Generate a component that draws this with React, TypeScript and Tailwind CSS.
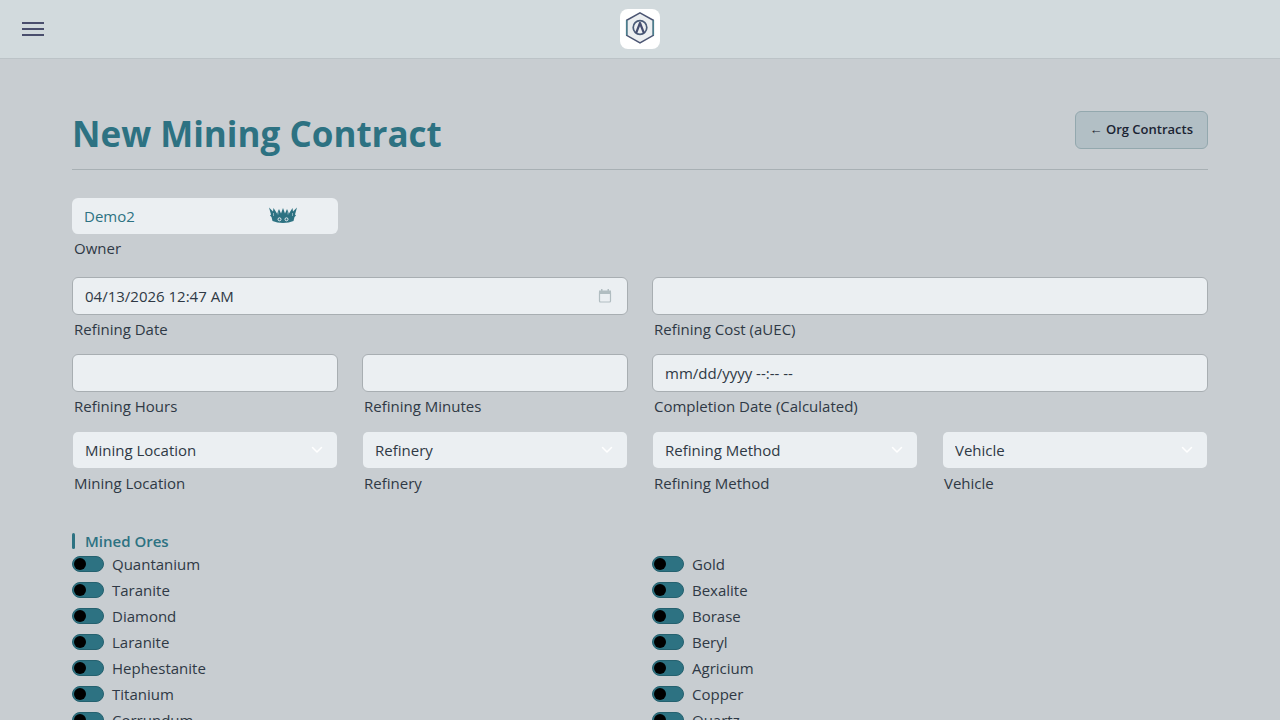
import { useState } from 'react';
import type { ReactNode } from 'react';

const ORES_LEFT = [
  'Quantanium',
  'Taranite',
  'Diamond',
  'Laranite',
  'Hephestanite',
  'Titanium',
  'Corrundum',
];

const ORES_RIGHT = ['Gold', 'Bexalite', 'Borase', 'Beryl', 'Agricium', 'Copper', 'Quartz'];

const inputClass =
  'block h-[38px] w-full rounded-md border border-[#a8aeb2] bg-[#ebeff2] px-3 text-[15px] text-[#2f3945] outline-none placeholder:text-[#2f3945] focus:border-[#2d7282]';

function LogoIcon() {
  return (
    <svg viewBox="0 0 40 40" className="h-10 w-10" aria-hidden="true">
      <path
        d="M20 3.8 33.300 11.300v15L20 33.800 6.700 26.300v-15z"
        fill="#eceff1"
        stroke="#4b5573"
        strokeWidth="1.5"
      />
      <path d="M6.700 11.300v15M33.300 11.300v15" stroke="#4a7f8d" strokeWidth="1.500" />
      <circle cx="20" cy="18.500" r="6.800" fill="none" stroke="#4b5c78" strokeWidth="1.700" />
      <path
        d="M16 24.300 20 14l4 10.300"
        fill="none"
        stroke="#454e70"
        strokeWidth="2.200"
        strokeLinejoin="round"
      />
    </svg>
  );
}

function CrownIcon() {
  return (
    <svg viewBox="0 0 28 18" className="h-[18px] w-7" aria-hidden="true">
      <path
        d="M0 .5l4 4L4.500 1l3.500 5.500L10 2l2 4.500L14 1l2 5.500L18 2l2 4.500L23.500 1l.5 3.500L28 .5l-2 7 1 1-1.500 1.500-1 4Q20 16 14 16T3.500 14l-1-4L1 8.500l1-1z"
        fill="#2d7282"
      />
      <path d="M9 4.500v3M19 4.500v3M4.500 6v3M23.500 6v3" stroke="#ebeff2" strokeWidth=".5" />
      <circle cx="10.500" cy="12.300" r="1.500" fill="#2d7282" stroke="#ebeff2" />
      <circle cx="17.500" cy="12.300" r="1.500" fill="#2d7282" stroke="#ebeff2" />
    </svg>
  );
}

function CalendarIcon() {
  return (
    <svg viewBox="0 0 14 14" className="h-3.5 w-3.5" aria-hidden="true">
      <path d="M1 1.500h12V5H1zM3 0h1.500v2H3zM9.500 0H11v2H9.500z" fill="#b1bdc1" />
      <rect
        x="1.500"
        y="2.500"
        width="11"
        height="10.500"
        rx="1"
        fill="none"
        stroke="#b1bdc1"
        strokeWidth="1.200"
      />
    </svg>
  );
}

function Field({
  id,
  label,
  className = '',
  children,
}: {
  id: string;
  label: string;
  className?: string;
  children: ReactNode;
}) {
  return (
    <div className={className}>
      {children}
      <label htmlFor={id} className="mt-0.5 block px-0.5 text-[15px] leading-6">
        {label}
      </label>
    </div>
  );
}

function SelectField({ id, label }: { id: string; label: string }) {
  return (
    <Field id={id} label={label}>
      <div className="relative">
        <select
          id={id}
          className="block h-[38px] w-full appearance-none rounded-md border border-transparent bg-[#ebeff2] bg-clip-padding px-3 text-[15px] text-[#2f3945] outline-none"
        >
          <option>{label}</option>
        </select>
        <svg
          viewBox="0 0 12 12"
          className="pointer-events-none absolute top-[13px] right-[15px] h-3 w-3"
          aria-hidden="true"
        >
          <path
            d="M1.500 3.500 6 8l4.500-4.500"
            fill="none"
            stroke="#fff"
            strokeWidth="1.500"
            strokeLinecap="round"
            strokeLinejoin="round"
          />
        </svg>
      </div>
    </Field>
  );
}

function OreSwitch({ name }: { name: string }) {
  const [checked, setChecked] = useState(false);

  return (
    <label className="flex h-[26px] items-center gap-2 text-[15px]">
      <input
        type="checkbox"
        role="switch"
        checked={checked}
        onChange={(e) => setChecked(e.target.checked)}
        className="h-4 w-8 appearance-none rounded-full border border-[#25616f] bg-[#2d7282] p-px before:block before:h-3 before:w-3 before:rounded-full before:bg-black checked:before:ml-auto"
      />
      {name}
    </label>
  );
}

export default function App() {
  const [refiningDate, setRefiningDate] = useState('04/13/2026 12:47 AM');

  return (
    <div className="min-h-screen bg-[#c8cdd1] font-['Open_Sans','Noto_Sans',sans-serif] text-[#2f3945]">
      <header className="grid h-[59px] grid-cols-3 items-center border-b border-[#bcc3c7] bg-[#d2dadd] px-[22px]">
        <button type="button" aria-label="Open menu" className="flex w-[22px] flex-col gap-1">
          <span className="h-0.5 bg-[#4a4e6d]" />
          <span className="h-0.5 bg-[#4a4e6d]" />
          <span className="h-0.5 bg-[#4a4e6d]" />
        </button>
        <a href="#" aria-label="Home" className="justify-self-center rounded-lg bg-white">
          <LogoIcon />
        </a>
      </header>

      <main className="px-[72px] pt-[52px]">
        <div className="flex items-start justify-between border-b border-[#a8b0b4] pb-3">
          <h1 className="text-[35px] leading-[46px] font-bold text-[#2d7282]">
            New Mining Contract
          </h1>
          <a
            href="#"
            className="flex h-[38px] items-center rounded-md border border-[#93a8ae] bg-[#b2bfc5] px-3.5 text-[13px] font-semibold text-[#1b2433]"
          >
            ← Org Contracts
          </a>
        </div>

        <form className="pt-7">
          <div className="grid grid-cols-4 gap-6">
            <Field id="owner" label="Owner">
              <div className="flex h-9 items-center rounded-md bg-[#ebeff2] pr-[41px] pl-3">
                <input
                  id="owner"
                  type="text"
                  readOnly
                  defaultValue="Demo2"
                  className="min-w-0 flex-1 bg-transparent text-[15px] text-[#2d7282] outline-none"
                />
                <CrownIcon />
              </div>
            </Field>
          </div>

          <div className="mt-[17px] grid grid-cols-4 gap-x-6 gap-y-[13px]">
            <Field id="refining-date" label="Refining Date" className="col-span-2">
              <div className="relative">
                <input
                  id="refining-date"
                  type="text"
                  value={refiningDate}
                  onChange={(e) => setRefiningDate(e.target.value)}
                  className={inputClass}
                />
                <button
                  type="button"
                  aria-label="Pick refining date"
                  className="absolute top-3 right-4"
                >
                  <CalendarIcon />
                </button>
              </div>
            </Field>
            <Field id="refining-cost" label="Refining Cost (aUEC)" className="col-span-2">
              <input id="refining-cost" type="text" inputMode="numeric" className={inputClass} />
            </Field>

            <Field id="refining-hours" label="Refining Hours">
              <input id="refining-hours" type="text" inputMode="numeric" className={inputClass} />
            </Field>
            <Field id="refining-minutes" label="Refining Minutes">
              <input id="refining-minutes" type="text" inputMode="numeric" className={inputClass} />
            </Field>
            <Field
              id="completion-date"
              label="Completion Date (Calculated)"
              className="col-span-2"
            >
              <input
                id="completion-date"
                type="text"
                readOnly
                placeholder="mm/dd/yyyy --:-- --"
                className={inputClass}
              />
            </Field>

            <SelectField id="mining-location" label="Mining Location" />
            <SelectField id="refinery" label="Refinery" />
            <SelectField id="refining-method" label="Refining Method" />
            <SelectField id="vehicle" label="Vehicle" />
          </div>

          <fieldset className="mt-[38px]">
            <legend className="flex h-4 items-center gap-2.5 text-[15px] font-semibold text-[#2d7282]">
              <span className="h-4 w-[3px] rounded-xs bg-[#2d7282]" />
              Mined Ores
            </legend>
            <div className="grid grid-cols-2 gap-x-6 pt-0.5">
              <div>
                {ORES_LEFT.map((ore) => (
                  <OreSwitch key={ore} name={ore} />
                ))}
              </div>
              <div>
                {ORES_RIGHT.map((ore) => (
                  <OreSwitch key={ore} name={ore} />
                ))}
              </div>
            </div>
          </fieldset>
        </form>
      </main>
    </div>
  );
}
